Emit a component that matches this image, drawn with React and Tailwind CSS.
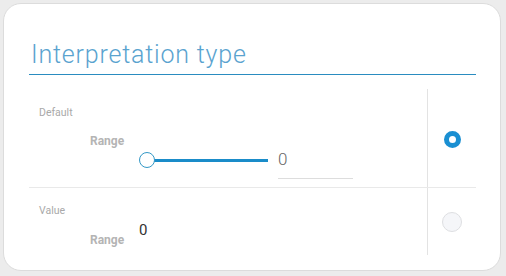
export default function App() {
  return (
    <div className="h-[276px] w-[506px] bg-[#ececec] pl-[3px] pt-[3px] font-['Roboto',sans-serif]">
      <div className="h-[268px] w-[498px] rounded-[18px] border border-[#dcdcdc] bg-white pl-[25px] pr-[24px] pt-[36px]">
        <div className="border-b-[1.5px] border-[#2a8cc0] pb-[4px] pl-[2px] text-[25px] font-light leading-[30px] tracking-[0.8px] text-[#5aa3cf]">
          Interpretation type
        </div>

        <div className="mt-[14px]">
          {/* Default */}
          <div className="grid h-[99px] grid-cols-[1fr_49px] border-b border-[#e9e9e9]">
            <div className="pl-[10px] pt-[17px]">
              <div className="text-[10.5px] leading-[14px] text-[#a9a9a9]">Default</div>
              <div className="pl-[51px]">
                <div className="mt-[14px] text-[12px] font-bold leading-[14px] text-[#b4b4b4]">Range</div>
                <div className="mt-[4px] flex items-start pl-[49px]">
                  <div className="relative h-[16px] w-[129px]">
                    <div className="ml-[8px] mt-[6.5px] h-[3px] bg-[#1a8cc9]" />
                    <div className="absolute left-0 top-0 h-[16px] w-[16px] rounded-full border-[1.5px] border-[#3398c6] bg-white" />
                  </div>
                  <div className="-mt-[3px] ml-[10px] h-[30px] w-[75px] border-b border-[#dddddd] text-[17px] font-light leading-[20px] text-[#666]">
                    0
                  </div>
                </div>
              </div>
            </div>
            <div className="flex items-center justify-center border-l border-[#e3e3e3] pt-[2px]">
              <div className="h-[17px] w-[17px] rounded-full border-[5px] border-[#1a8fd2] bg-white" />
            </div>
          </div>

          {/* Value */}
          <div className="grid h-[67px] grid-cols-[1fr_49px]">
            <div className="pl-[10px] pt-[16px]">
              <div className="text-[10.5px] leading-[14px] text-[#a9a9a9]">Value</div>
              <div className="mt-[3px] flex items-start pl-[51px]">
                <div className="mt-[12px] w-[49px] text-[12px] font-bold leading-[14px] text-[#b4b4b4]">Range</div>
                <div className="text-[15px] leading-[18px] text-[#333]">0</div>
              </div>
            </div>
            <div className="flex items-center justify-center border-l border-[#e3e3e3]">
              <div className="h-[20px] w-[20px] rounded-full border-[1.5px] border-[#dedfe2] bg-[#f5f6f9]" />
            </div>
          </div>
        </div>
      </div>
    </div>
  );
}
